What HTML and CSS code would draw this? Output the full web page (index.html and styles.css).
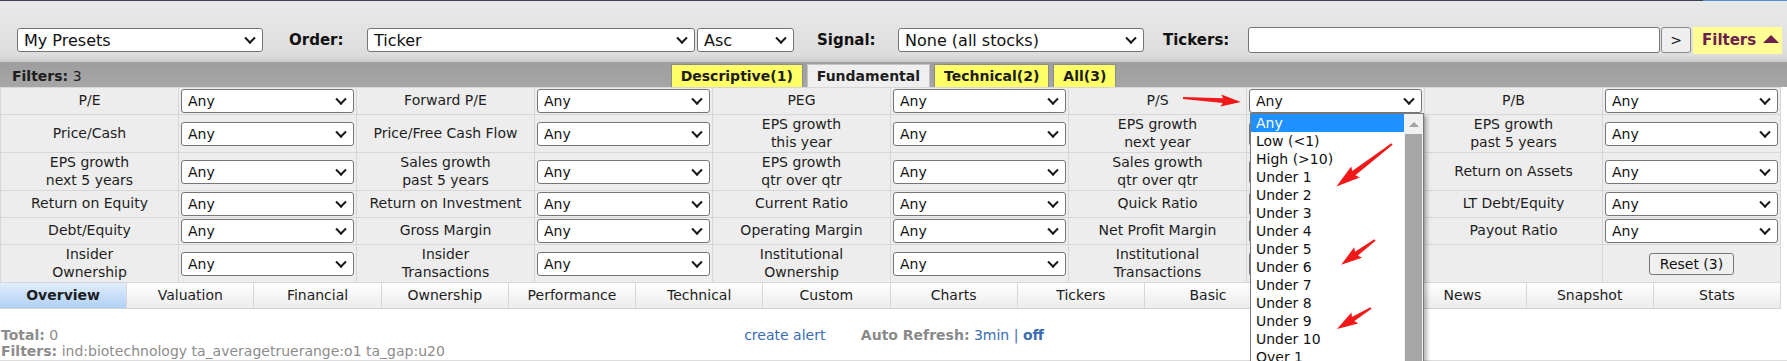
FILE: index.html
```html
<!DOCTYPE html>
<html lang="en">
<head>
  <meta charset="UTF-8">
  <meta name="viewport" content="width=device-width, initial-scale=1.0">
  <title>Screener - Fundamental Filters</title>
  <link rel="stylesheet" href="styles.css">
</head>
<body>
  <div class="topline"><span class="topline-dark"></span><span class="topline-blue"></span></div>

  <!-- presets / order / signal / tickers -->
  <div class="toolbar">
    <span class="sel sel-presets"><select><option>My Presets</option></select></span>
    <span class="tb-label tb-order">Order:</span>
    <span class="sel sel-order"><select><option>Ticker</option></select></span>
    <span class="sel sel-dir"><select><option>Asc</option></select></span>
    <span class="tb-label tb-signal">Signal:</span>
    <span class="sel sel-signal"><select><option>None (all stocks)</option></select></span>
    <span class="tb-label tb-tickers">Tickers:</span>
    <input class="tickers-input" type="text">
    <button class="go-btn">&gt;</button>
    <div class="filters-toggle">Filters <span class="caret"></span></div>
  </div>

  <div class="filter-bar">
    <div class="filter-count"><b>Filters:</b> 3</div>
    <div class="filter-tabs">
      <span class="ftab ftab-yellow">Descriptive(1)</span>
      <span class="ftab ftab-active">Fundamental</span>
      <span class="ftab ftab-yellow">Technical(2)</span>
      <span class="ftab ftab-yellow">All(3)</span>
    </div>
    <div></div>
  </div>

  <table class="filters">
    <tr>
      <td class="fl">P/E</td><td><span class="sel"><select><option>Any</option></select></span></td>
      <td class="fl">Forward P/E</td><td><span class="sel"><select><option>Any</option></select></span></td>
      <td class="fl">PEG</td><td><span class="sel"><select><option>Any</option></select></span></td>
      <td class="fl">P/S</td>
      <td>
        <span class="sel sel-open"><select><option>Any</option></select>
          <div class="dropdown">
            <ul class="dropdown-list">
              <li class="on">Any</li>
              <li>Low (&lt;1)</li>
              <li>High (&gt;10)</li>
              <li>Under 1</li>
              <li>Under 2</li>
              <li>Under 3</li>
              <li>Under 4</li>
              <li>Under 5</li>
              <li>Under 6</li>
              <li>Under 7</li>
              <li>Under 8</li>
              <li>Under 9</li>
              <li>Under 10</li>
              <li>Over 1</li>
            </ul>
            <div class="dropdown-scroll"><span class="scroll-up"></span><span class="scroll-thumb"></span></div>
          </div>
        </span>
      </td>
      <td class="fl">P/B</td><td><span class="sel"><select><option>Any</option></select></span></td>
    </tr>
    <tr>
      <td class="fl">Price/Cash</td><td><span class="sel"><select><option>Any</option></select></span></td>
      <td class="fl">Price/Free Cash Flow</td><td><span class="sel"><select><option>Any</option></select></span></td>
      <td class="fl">EPS growth<br>this year</td><td><span class="sel"><select><option>Any</option></select></span></td>
      <td class="fl">EPS growth<br>next year</td><td><span class="sel"><select><option>Any</option></select></span></td>
      <td class="fl">EPS growth<br>past 5 years</td><td><span class="sel"><select><option>Any</option></select></span></td>
    </tr>
    <tr>
      <td class="fl">EPS growth<br>next 5 years</td><td><span class="sel"><select><option>Any</option></select></span></td>
      <td class="fl">Sales growth<br>past 5 years</td><td><span class="sel"><select><option>Any</option></select></span></td>
      <td class="fl">EPS growth<br>qtr over qtr</td><td><span class="sel"><select><option>Any</option></select></span></td>
      <td class="fl">Sales growth<br>qtr over qtr</td><td><span class="sel"><select><option>Any</option></select></span></td>
      <td class="fl">Return on Assets</td><td><span class="sel"><select><option>Any</option></select></span></td>
    </tr>
    <tr>
      <td class="fl">Return on Equity</td><td><span class="sel"><select><option>Any</option></select></span></td>
      <td class="fl">Return on Investment</td><td><span class="sel"><select><option>Any</option></select></span></td>
      <td class="fl">Current Ratio</td><td><span class="sel"><select><option>Any</option></select></span></td>
      <td class="fl">Quick Ratio</td><td><span class="sel"><select><option>Any</option></select></span></td>
      <td class="fl">LT Debt/Equity</td><td><span class="sel"><select><option>Any</option></select></span></td>
    </tr>
    <tr>
      <td class="fl">Debt/Equity</td><td><span class="sel"><select><option>Any</option></select></span></td>
      <td class="fl">Gross Margin</td><td><span class="sel"><select><option>Any</option></select></span></td>
      <td class="fl">Operating Margin</td><td><span class="sel"><select><option>Any</option></select></span></td>
      <td class="fl">Net Profit Margin</td><td><span class="sel"><select><option>Any</option></select></span></td>
      <td class="fl">Payout Ratio</td><td><span class="sel"><select><option>Any</option></select></span></td>
    </tr>
    <tr>
      <td class="fl">Insider<br>Ownership</td><td><span class="sel"><select><option>Any</option></select></span></td>
      <td class="fl">Insider<br>Transactions</td><td><span class="sel"><select><option>Any</option></select></span></td>
      <td class="fl">Institutional<br>Ownership</td><td><span class="sel"><select><option>Any</option></select></span></td>
      <td class="fl">Institutional<br>Transactions</td><td><span class="sel"><select><option>Any</option></select></span></td>
      <td class="fl"></td><td><button class="reset-btn">Reset (3)</button></td>
    </tr>
  </table>

  <div class="views">
    <span class="view view-active">Overview</span>
    <span class="view">Valuation</span>
    <span class="view">Financial</span>
    <span class="view">Ownership</span>
    <span class="view">Performance</span>
    <span class="view">Technical</span>
    <span class="view">Custom</span>
    <span class="view">Charts</span>
    <span class="view">Tickers</span>
    <span class="view">Basic</span>
    <span class="view">TA</span>
    <span class="view">News</span>
    <span class="view">Snapshot</span>
    <span class="view">Stats</span>
  </div>

  <div class="results">
    <div class="results-line">
      <div class="total"><b>Total:</b> 0</div>
      <div class="alerts">
        <a href="#">create alert</a>
        <span class="refresh"><b>Auto Refresh:</b> <a href="#">3min</a> | <a href="#" class="strong">off</a></span>
      </div>
      <div></div>
    </div>
    <div class="active-filters"><b>Filters:</b> ind:biotechnology ta_averagetruerange:o1 ta_gap:u20</div>
  </div>

  <!-- red annotation arrows drawn over the screenshot -->
  <svg class="annotations" width="1787" height="361" viewBox="0 0 1787 361">
    <g fill="#f01818">
      <polygon points="0,-1 40,-2.4 38,-6 58,0 38,6 40,2.4 0,1" transform="translate(1183 98) rotate(3.9)"/>
      <polygon points="0,-1 48,-2.6 46,-7 70,0 46,7 48,2.6 0,1" transform="translate(1392 144) rotate(142.6)"/>
      <polygon points="0,-1 23,-2.4 21,-6.5 42,0 21,6.5 23,2.4 0,1" transform="translate(1375 240) rotate(143.7)"/>
      <polygon points="0,-1 21,-2.4 19,-6.5 40,0 19,6.5 21,2.4 0,1" transform="translate(1371 308) rotate(148.3)"/>
    </g>
  </svg>
</body>
</html>
```

FILE: styles.css
```css
html, body {
  margin: 0;
  overflow: hidden;
}
body {
  font-family: "DejaVu Sans", Verdana, sans-serif;
  font-size: 14px;
  color: #1d1d1d;
  background-color: #fff;
  position: relative;
  width: 1787px;
  height: 361px;
}

.topline {
  display: flex;
  height: 1px;
}
.topline-dark {
  flex: 1;
  background-color: #3d4150;
}
.topline-blue {
  width: 84px;
  background-color: #4d8fd6;
}

/* selects */
.sel {
  position: relative;
  display: block;
}
.sel select {
  -webkit-appearance: none;
  appearance: none;
  display: block;
  width: 100%;
  height: 24px;
  margin: 0;
  padding: 0 24px 0 6px;
  box-sizing: border-box;
  border: 1px solid #767676;
  border-radius: 3px;
  background-color: #fff;
  font-family: "DejaVu Sans", Verdana, sans-serif;
  font-size: 14px;
  color: #111;
}
.sel::after {
  content: "";
  position: absolute;
  right: 9px;
  top: 50%;
  width: 6px;
  height: 6px;
  border-right: 2px solid #1a1a1a;
  border-bottom: 2px solid #1a1a1a;
  transform: translateY(-72%) rotate(45deg);
  pointer-events: none;
}

/* toolbar */
.toolbar {
  display: flex;
  align-items: center;
  height: 61px;
  box-sizing: border-box;
  padding: 17px 0 0 17px;
  background: linear-gradient(#e9e9e9 0%, #dddddd 88%, #cbcbcb 100%);
}
.toolbar .sel select {
  font-size: 16px;
}
.sel-presets { width: 246px; }
.sel-order { width: 328px; }
.sel-dir { width: 97px; margin-left: 2px; }
.sel-signal { width: 246px; }
.tb-label {
  font-weight: bold;
  font-size: 15px;
  color: #111;
}
.tb-order { margin-left: 26px; width: 78px; }
.tb-signal { margin-left: 23px; width: 81px; }
.tb-tickers { margin-left: 19px; width: 85px; }
.tickers-input {
  width: 412px;
  height: 26px;
  margin: 0;
  box-sizing: border-box;
  border: 1px solid #767676;
  border-radius: 3px;
  background-color: #fff;
}
.go-btn {
  width: 30px;
  height: 26px;
  margin: 0 0 0 1px;
  padding: 0;
  border: 1px solid #8a8a8a;
  border-radius: 3px;
  background-color: #efefef;
  font-family: "DejaVu Sans", Verdana, sans-serif;
  font-size: 14px;
  color: #111;
}
.filters-toggle {
  display: flex;
  align-items: center;
  gap: 7px;
  width: 89px;
  height: 27px;
  margin-left: 2px;
  padding-left: 9px;
  box-sizing: border-box;
  background-color: #fefe94;
  color: #6d1f4d;
  font-weight: bold;
  font-size: 15px;
}
.caret {
  width: 0;
  height: 0;
  border-left: 8px solid transparent;
  border-right: 8px solid transparent;
  border-bottom: 8px solid #6d1f4d;
  margin-top: -2px;
}

/* filter bar with tabs */
.filter-bar {
  display: grid;
  grid-template-columns: 1fr auto 1fr;
  align-items: end;
  height: 25px;
  background: linear-gradient(#9e9e9e, #a6a6a6);
}
.filter-count {
  padding: 0 0 2px 12px;
  line-height: 17px;
}
.filter-tabs {
  display: flex;
  gap: 4px;
}
.ftab {
  height: 23px;
  line-height: 23px;
  padding: 0 9px;
  box-sizing: border-box;
  border: 1px solid #8c8c8c;
  border-bottom: none;
  font-weight: bold;
}
.ftab-yellow {
  background-color: #ffff66;
}
.ftab-active {
  background-color: #efefef;
  border-color: #c4c4c4;
}

/* filter table */
.filters {
  width: 1781px;
  border-collapse: collapse;
  table-layout: fixed;
  background-color: #ededed;
}
.filters td {
  border: 1px solid #d7d7d7;
  padding: 1px 2px;
  line-height: 17.5px;
  text-align: center;
  vertical-align: middle;
}
.reset-btn {
  height: 22px;
  padding: 0 10px;
  border: 1px solid #767676;
  border-radius: 3px;
  background-color: #efefef;
  font-family: "DejaVu Sans", Verdana, sans-serif;
  font-size: 14px;
  color: #111;
}

/* open dropdown */
.dropdown {
  position: absolute;
  left: 1px;
  top: 100%;
  z-index: 5;
  display: flex;
  width: 174px;
  height: 262px;
  box-sizing: border-box;
  border: 1px solid #7a7a7a;
  background-color: #fff;
  box-shadow: 3px 3px 4px rgba(0, 0, 0, 0.28);
  text-align: left;
}
.dropdown-list {
  flex: 1;
  list-style: none;
  margin: 0;
  padding: 0;
  overflow: hidden;
}
.dropdown-list li {
  height: 18px;
  line-height: 18px;
  padding-left: 5px;
  color: #111;
  white-space: nowrap;
}
.dropdown-list li.on {
  background-color: #1e90ff;
  color: #fff;
}
.dropdown-scroll {
  display: flex;
  flex-direction: column;
  width: 19px;
  background-color: #f0f0f0;
}
.scroll-up {
  position: relative;
  height: 20px;
}
.scroll-up::before {
  content: "";
  position: absolute;
  left: 5px;
  top: 8px;
  border-left: 5px solid transparent;
  border-right: 5px solid transparent;
  border-bottom: 5px solid #a3a3a3;
}
.scroll-thumb {
  flex: 1;
  margin: 0 1px;
  background-color: #a6a6a6;
}

/* view tabs */
.views {
  display: grid;
  grid-template-columns: repeat(14, 1fr);
  width: 1781px;
  border-bottom: 1px solid #d2d2d2;
}
.view {
  height: 25px;
  line-height: 25px;
  text-align: center;
  background: linear-gradient(#ffffff, #ececec);
  border-right: 1px solid #d8d8d8;
}
.view-active {
  background: linear-gradient(#e2eefc, #aed0f4);
  font-weight: bold;
}

/* results info */
.results {
  height: 33px;
  padding: 18px 0 0 1px;
  border-bottom: 1px solid #dcdcdc;
  line-height: 16px;
}
.results-line {
  display: grid;
  grid-template-columns: 1fr auto 1fr;
}
.total,
.active-filters {
  color: #8c8c8c;
}
.alerts a {
  color: #3a6cb5;
  text-decoration: none;
}
.alerts a.strong {
  font-weight: bold;
}
.refresh {
  margin-left: 31px;
  color: #3a6cb5;
}
.refresh b {
  color: #8a8a8a;
}

.annotations {
  position: absolute;
  top: 0;
  left: 0;
  z-index: 10;
  pointer-events: none;
}
```
